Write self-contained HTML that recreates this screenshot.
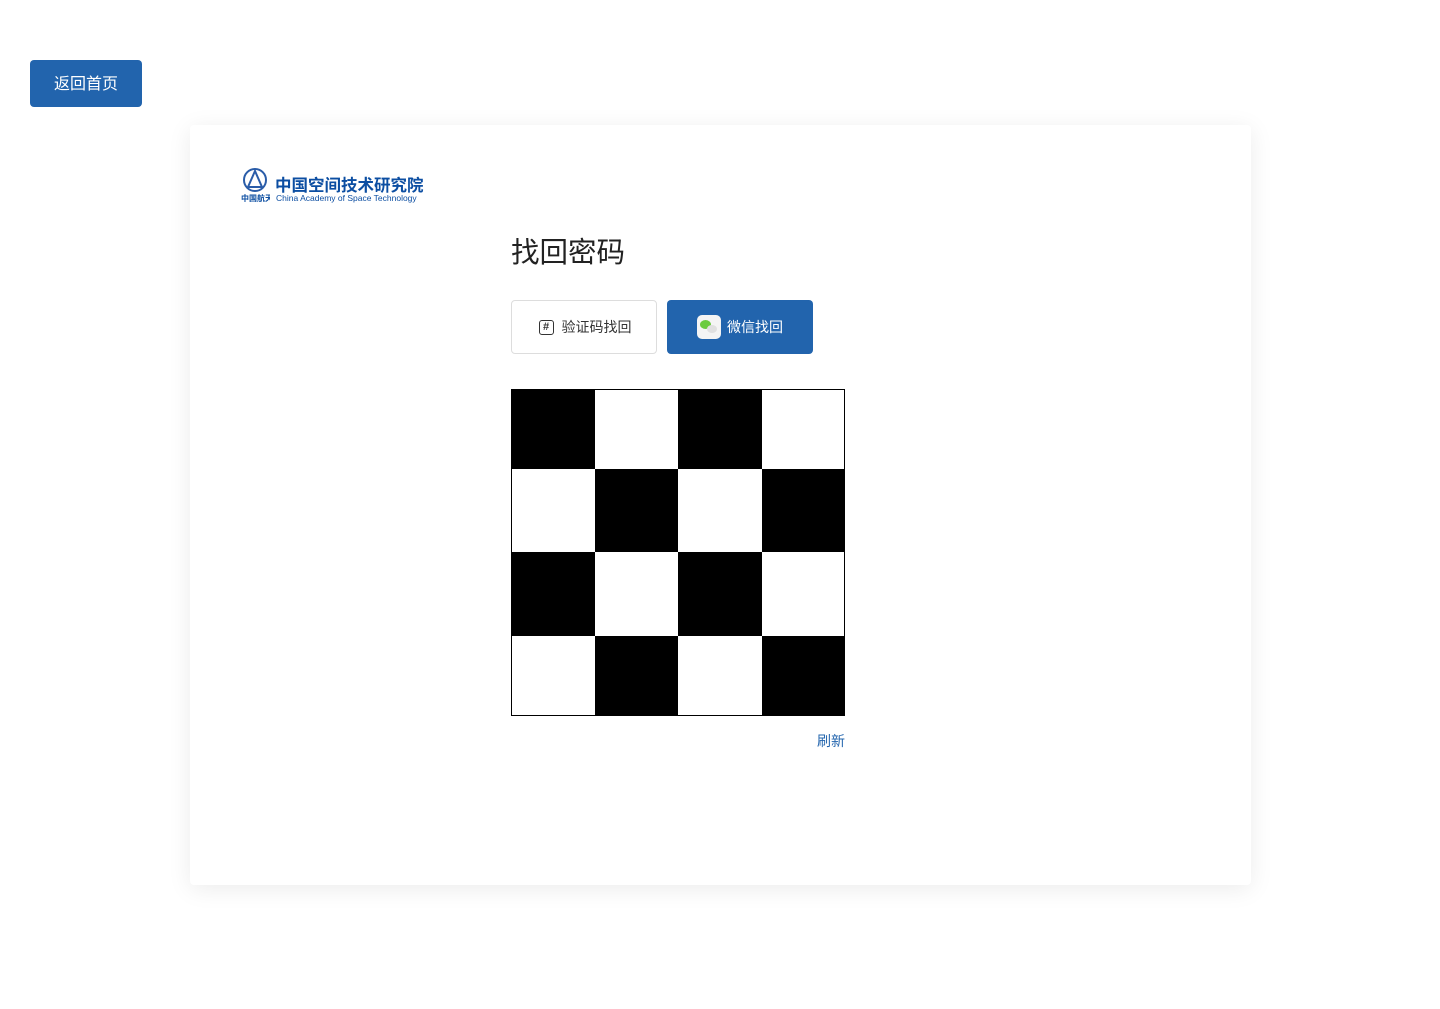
<!DOCTYPE html>
<html><head><meta charset="utf-8"><style>
body{margin:0;width:1440px;height:1009px;background:#fff;font-family:"Liberation Sans","Noto Sans CJK SC",sans-serif;position:relative;overflow:hidden}
.back{position:absolute;left:30px;top:60px;width:112px;height:47px;background:#2264ad;border-radius:4px;color:#fff;font-size:16px;line-height:49px;text-align:center}
.card{position:absolute;left:190px;top:125px;width:1061px;height:760px;background:#fff;border-radius:4px;box-shadow:0 4px 24px rgba(0,0,0,.08)}
.logo{position:absolute;left:240px;top:168px}
h1{position:absolute;left:511px;top:235px;margin:0;font-size:28.5px;font-weight:normal;color:#222;line-height:36px}
.b1{position:absolute;left:511px;top:300px;border:1px solid #ddd;border-radius:4px;box-sizing:border-box;font-size:14px;color:#333;display:flex;align-items:center;justify-content:center;gap:8px;width:146px;height:54px;padding-left:2px}
.b2{position:absolute;left:667px;top:300px;width:146px;height:54px;background:#2264ad;border-radius:4px;font-size:14px;color:#fff;display:flex;align-items:center;justify-content:center;gap:6px}
.qr{position:absolute;left:511px;top:389px;width:334px;height:327px;border:1px solid #000;box-sizing:border-box;display:grid;grid-template-columns:83px 83px 84px 82px;grid-template-rows:79px 83px 84px 79px}
.k{background:#000}
.ref{position:absolute;left:817px;top:731px;font-size:14px;color:#2264ad}
</style></head><body>
<div class="back">返回首页</div>
<div class="card"></div>
<div class="logo">
<svg width="30" height="36" viewBox="0 0 30 36" style="position:absolute;left:0;top:0"><circle cx="15" cy="12" r="11" fill="none" stroke="#2a5ca8" stroke-width="2"/><path d="M15 3 L8 19 L22 19 Z" fill="none" stroke="#2a5ca8" stroke-width="2"/><text x="1" y="33" font-size="8" fill="#0c4ea2" font-family="Noto Sans CJK SC" font-weight="bold">中国航天</text></svg>
<div style="position:absolute;left:35px;top:4px;font-size:16.5px;font-weight:bold;color:#0c4ea2;white-space:nowrap">中国空间技术研究院</div>
<div style="position:absolute;left:36px;top:25px;font-size:8.5px;color:#0c4ea2;white-space:nowrap">China Academy of Space Technology</div>
</div>
<h1>找回密码</h1>
<div class="b1"><span style="display:inline-block;width:13px;height:13px;border:1.5px solid #333;border-radius:3px;font-size:11px;line-height:13px;text-align:center;font-weight:bold">#</span>验证码找回</div>
<div class="b2"><span style="display:inline-block;width:24px;height:24px;background:#f4f4f4;border-radius:5px;position:relative"><span style="position:absolute;left:3px;top:5px;width:11px;height:9px;background:#6bcb3f;border-radius:50%"></span><span style="position:absolute;left:10px;top:10px;width:10px;height:8px;background:#e0e0e0;border-radius:50%"></span></span>微信找回</div>
<div class="qr">
<div class="k"></div><div></div><div class="k"></div><div></div>
<div></div><div class="k"></div><div></div><div class="k"></div>
<div class="k"></div><div></div><div class="k"></div><div></div>
<div></div><div class="k"></div><div></div><div class="k"></div>
</div>
<div class="ref">刷新</div>
</body></html>
